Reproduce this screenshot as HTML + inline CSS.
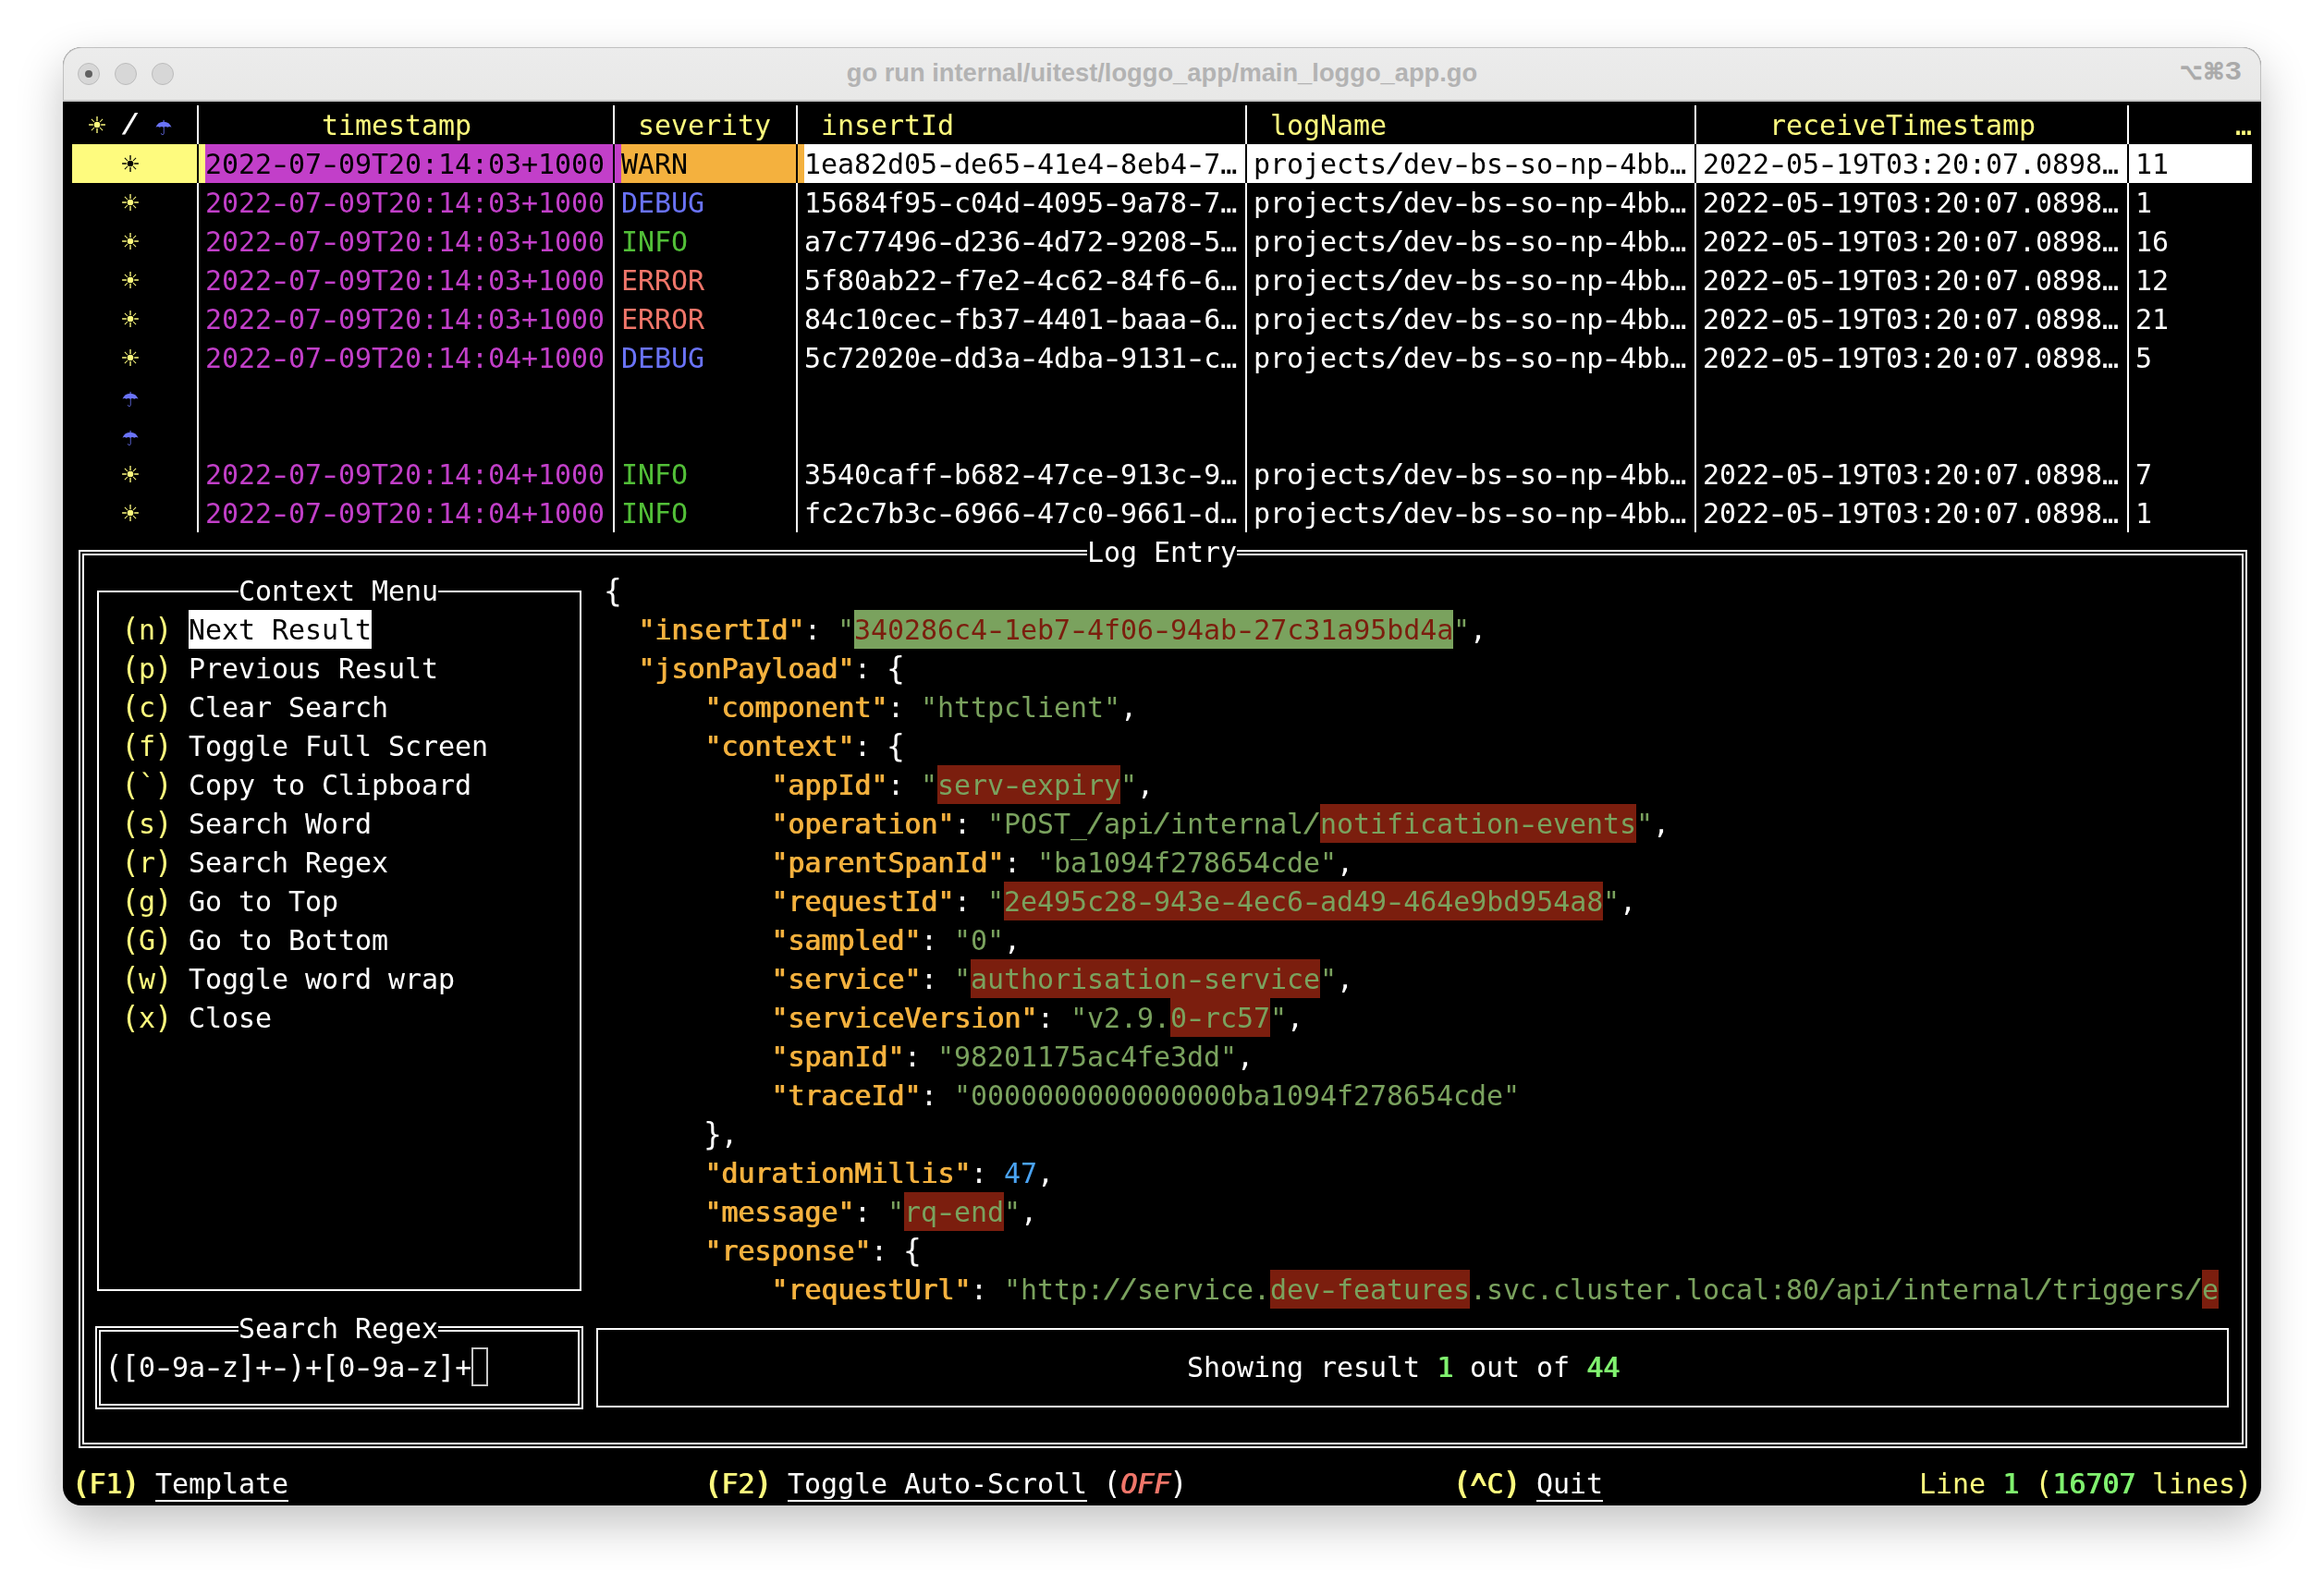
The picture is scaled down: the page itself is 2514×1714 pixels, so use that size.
<!DOCTYPE html>
<html><head><meta charset="utf-8"><title>go run internal/uitest/loggo_app/main_loggo_app.go</title>
<style>
html,body{margin:0;padding:0;background:#fff;}
body{width:2514px;height:1714px;position:relative;overflow:hidden;}
.win{position:absolute;left:68px;top:51px;width:2378px;height:1578px;border-radius:20px;background:#000;overflow:hidden;
 box-shadow:0 20px 50px rgba(0,0,0,.24);}
.tb:after{content:"";position:absolute;left:0;top:0;right:0;height:80px;border-radius:20px 20px 0 0;box-shadow:inset 0 0 0 1px rgba(150,150,150,.5);pointer-events:none;}
.tb{position:absolute;left:0;top:0;right:0;height:57px;overflow:hidden;background:linear-gradient(#ececec,#e8e8e7);border-bottom:2px solid #c6c6c6;}
.lt{position:absolute;top:17px;width:22px;height:22px;border-radius:50%;background:#d7d7d7;border:1px solid #bbbbbb;}
.lt i{position:absolute;left:7px;top:7px;width:8px;height:8px;border-radius:50%;background:#606060;}
.ttl{position:absolute;left:0;right:0;top:0;height:57px;text-align:center;font:bold 27.3px "Liberation Sans",sans-serif;line-height:56px;color:#b3b3b3;white-space:pre;}
.kb{position:absolute;right:23px;top:0;height:57px;font:bold 25px "Liberation Sans","DejaVu Sans",sans-serif;line-height:50px;letter-spacing:-2.2px;color:#aaaaaa;-webkit-text-stroke:.6px #aaaaaa;white-space:pre;}
.kb b{-webkit-text-stroke:0;font-size:28.5px;letter-spacing:0;margin-left:3px;display:inline-block;transform:scaleX(1.12);transform-origin:0 50%;}
.kb u{display:inline-block;text-decoration:none;margin-right:3px;transform:scaleX(.85);transform-origin:100% 50%;}
.term{position:absolute;left:0;top:0;width:2514px;height:1714px;font-family:"DejaVu Sans Mono","Liberation Mono",monospace;font-size:30px;letter-spacing:-0.0615px;will-change:transform;}
.t{position:absolute;height:42px;line-height:44px;white-space:pre;display:block;}
.b{position:absolute;height:42px;}
.r{position:absolute;}
.bx{position:absolute;box-sizing:border-box;border:2px solid #fff;}
.ic{position:absolute;overflow:visible;}
.bd{text-shadow:1px 0 0 currentColor;}
.it{font-style:italic;}
.sl{transform:translateY(-2.5px) scale(1.22,0.97);}
.t i{display:inline-block;font-style:inherit;}
.h{transform:scaleX(1.42);}
.p{transform:scale(1.1,1.11);}
.c{transform-origin:50% 20%;transform:scaleY(1.7);}
.s{transform:translateY(-2px) scale(1.19,0.97);}
.ul{text-decoration:underline;text-decoration-thickness:2px;text-underline-offset:6.5px;}
.cur{position:absolute;width:18px;height:42px;box-sizing:border-box;border:2px solid #c7c7c7;}
</style></head>
<body>
<div class="win">
 <div class="tb">
  <div class="lt" style="left:16px"><i></i></div><div class="lt" style="left:56px"></div><div class="lt" style="left:96px"></div>
  <div class="ttl">go run internal/uitest/loggo_app/main_loggo_app.go</div>
  <div class="kb"><u>⌥</u>⌘<b>3</b></div>
 </div>
</div>
<div class="term">
<svg class="ic" style="left:95px;top:125px" width="20" height="20" viewBox="-10 -10 20 20"><circle r="3.3" fill="#fefb7e"/><g stroke="#fefb7e" fill="none"><path d="M0-8.9V-4M0 8.9V4M-8.9 0H-4.2M8.9 0H4.2" stroke-width="1.35"/><path d="M-6.1-6.1L-3-3M6.1 6.1L3 3M-6.1 6.1L-3 3M6.1-6.1L3-3" stroke-width="1.05"/></g></svg>
<span class="t sl" style="left:132px;top:114px;color:#fff;">/</span>
<svg class="ic" style="left:167.3px;top:126px" width="20" height="24" viewBox="-10 -12 20 24"><path d="M-8.5-0.3A9 9 0 0 1 8.5-0.3Q6.4-1.9 4.25-0.3Q2.1-1.9 0-0.3Q-2.1-1.9-4.25-0.3Q-6.4-1.9-8.5-0.3Z" fill="#6a73f8"/><path d="M0.1-8.1V-5.5" stroke="#6a73f8" stroke-width="1" fill="none"/><path d="M0.25-1.5V6.2A1.45 1.45 0 0 1-2.65 6.2" fill="none" stroke="#6a73f8" stroke-width="1" stroke-opacity=".8"/></svg>
<span class="t" style="left:348px;top:114px;color:#fefb7e;">timestamp</span>
<span class="t" style="left:690px;top:114px;color:#fefb7e;">severity</span>
<span class="t" style="left:888px;top:114px;color:#fefb7e;">insertId</span>
<span class="t" style="left:1374px;top:114px;color:#fefb7e;">logName</span>
<span class="t" style="left:1914px;top:114px;color:#fefb7e;">receiveTimestamp</span>
<span class="t" style="left:2418px;top:114px;color:#fefb7e;">…</span>
<div class="b" style="left:78px;top:156px;width:144px;background:#fefb7e;"></div>
<div class="b" style="left:222px;top:156px;width:450px;background:#c23fc9;"></div>
<div class="b" style="left:672px;top:156px;width:198px;background:#f4b13e;"></div>
<div class="b" style="left:870px;top:156px;width:1566px;background:#fff;"></div>
<svg class="ic" style="left:131px;top:167px" width="20" height="20" viewBox="-10 -10 20 20"><circle r="3.3" fill="#000"/><g stroke="#000" fill="none"><path d="M0-8.9V-4M0 8.9V4M-8.9 0H-4.2M8.9 0H4.2" stroke-width="1.35"/><path d="M-6.1-6.1L-3-3M6.1 6.1L3 3M-6.1 6.1L-3 3M6.1-6.1L3-3" stroke-width="1.05"/></g></svg>
<span class="t" style="left:222px;top:156px;color:#000;">2022<i class="h">-</i>07<i class="h">-</i>09T20:14:03+1000</span>
<span class="t" style="left:672px;top:156px;color:#000;">WARN</span>
<span class="t" style="left:870px;top:156px;color:#000;">1ea82d05<i class="h">-</i>de65<i class="h">-</i>41e4<i class="h">-</i>8eb4<i class="h">-</i>7…</span>
<span class="t" style="left:1356px;top:156px;color:#000;">projects<i class="s">/</i>dev<i class="h">-</i>bs<i class="h">-</i>so<i class="h">-</i>np<i class="h">-</i>4bb…</span>
<span class="t" style="left:1842px;top:156px;color:#000;">2022<i class="h">-</i>05<i class="h">-</i>19T03:20:07.0898…</span>
<span class="t" style="left:2310px;top:156px;color:#000;">11</span>
<svg class="ic" style="left:131px;top:209px" width="20" height="20" viewBox="-10 -10 20 20"><circle r="3.3" fill="#fefb7e"/><g stroke="#fefb7e" fill="none"><path d="M0-8.9V-4M0 8.9V4M-8.9 0H-4.2M8.9 0H4.2" stroke-width="1.35"/><path d="M-6.1-6.1L-3-3M6.1 6.1L3 3M-6.1 6.1L-3 3M6.1-6.1L3-3" stroke-width="1.05"/></g></svg>
<span class="t" style="left:222px;top:198px;color:#c23fc9;">2022<i class="h">-</i>07<i class="h">-</i>09T20:14:03+1000</span>
<span class="t" style="left:672px;top:198px;color:#6a73f8;">DEBUG</span>
<span class="t" style="left:870px;top:198px;color:#fff;">15684f95<i class="h">-</i>c04d<i class="h">-</i>4095<i class="h">-</i>9a78<i class="h">-</i>7…</span>
<span class="t" style="left:1356px;top:198px;color:#fff;">projects<i class="s">/</i>dev<i class="h">-</i>bs<i class="h">-</i>so<i class="h">-</i>np<i class="h">-</i>4bb…</span>
<span class="t" style="left:1842px;top:198px;color:#fff;">2022<i class="h">-</i>05<i class="h">-</i>19T03:20:07.0898…</span>
<span class="t" style="left:2310px;top:198px;color:#fff;">1</span>
<svg class="ic" style="left:131px;top:251px" width="20" height="20" viewBox="-10 -10 20 20"><circle r="3.3" fill="#fefb7e"/><g stroke="#fefb7e" fill="none"><path d="M0-8.9V-4M0 8.9V4M-8.9 0H-4.2M8.9 0H4.2" stroke-width="1.35"/><path d="M-6.1-6.1L-3-3M6.1 6.1L3 3M-6.1 6.1L-3 3M6.1-6.1L3-3" stroke-width="1.05"/></g></svg>
<span class="t" style="left:222px;top:240px;color:#c23fc9;">2022<i class="h">-</i>07<i class="h">-</i>09T20:14:03+1000</span>
<span class="t" style="left:672px;top:240px;color:#52bf38;">INFO</span>
<span class="t" style="left:870px;top:240px;color:#fff;">a7c77496<i class="h">-</i>d236<i class="h">-</i>4d72<i class="h">-</i>9208<i class="h">-</i>5…</span>
<span class="t" style="left:1356px;top:240px;color:#fff;">projects<i class="s">/</i>dev<i class="h">-</i>bs<i class="h">-</i>so<i class="h">-</i>np<i class="h">-</i>4bb…</span>
<span class="t" style="left:1842px;top:240px;color:#fff;">2022<i class="h">-</i>05<i class="h">-</i>19T03:20:07.0898…</span>
<span class="t" style="left:2310px;top:240px;color:#fff;">16</span>
<svg class="ic" style="left:131px;top:293px" width="20" height="20" viewBox="-10 -10 20 20"><circle r="3.3" fill="#fefb7e"/><g stroke="#fefb7e" fill="none"><path d="M0-8.9V-4M0 8.9V4M-8.9 0H-4.2M8.9 0H4.2" stroke-width="1.35"/><path d="M-6.1-6.1L-3-3M6.1 6.1L3 3M-6.1 6.1L-3 3M6.1-6.1L3-3" stroke-width="1.05"/></g></svg>
<span class="t" style="left:222px;top:282px;color:#c23fc9;">2022<i class="h">-</i>07<i class="h">-</i>09T20:14:03+1000</span>
<span class="t" style="left:672px;top:282px;color:#f0766a;">ERROR</span>
<span class="t" style="left:870px;top:282px;color:#fff;">5f80ab22<i class="h">-</i>f7e2<i class="h">-</i>4c62<i class="h">-</i>84f6<i class="h">-</i>6…</span>
<span class="t" style="left:1356px;top:282px;color:#fff;">projects<i class="s">/</i>dev<i class="h">-</i>bs<i class="h">-</i>so<i class="h">-</i>np<i class="h">-</i>4bb…</span>
<span class="t" style="left:1842px;top:282px;color:#fff;">2022<i class="h">-</i>05<i class="h">-</i>19T03:20:07.0898…</span>
<span class="t" style="left:2310px;top:282px;color:#fff;">12</span>
<svg class="ic" style="left:131px;top:335px" width="20" height="20" viewBox="-10 -10 20 20"><circle r="3.3" fill="#fefb7e"/><g stroke="#fefb7e" fill="none"><path d="M0-8.9V-4M0 8.9V4M-8.9 0H-4.2M8.9 0H4.2" stroke-width="1.35"/><path d="M-6.1-6.1L-3-3M6.1 6.1L3 3M-6.1 6.1L-3 3M6.1-6.1L3-3" stroke-width="1.05"/></g></svg>
<span class="t" style="left:222px;top:324px;color:#c23fc9;">2022<i class="h">-</i>07<i class="h">-</i>09T20:14:03+1000</span>
<span class="t" style="left:672px;top:324px;color:#f0766a;">ERROR</span>
<span class="t" style="left:870px;top:324px;color:#fff;">84c10cec<i class="h">-</i>fb37<i class="h">-</i>4401<i class="h">-</i>baaa<i class="h">-</i>6…</span>
<span class="t" style="left:1356px;top:324px;color:#fff;">projects<i class="s">/</i>dev<i class="h">-</i>bs<i class="h">-</i>so<i class="h">-</i>np<i class="h">-</i>4bb…</span>
<span class="t" style="left:1842px;top:324px;color:#fff;">2022<i class="h">-</i>05<i class="h">-</i>19T03:20:07.0898…</span>
<span class="t" style="left:2310px;top:324px;color:#fff;">21</span>
<svg class="ic" style="left:131px;top:377px" width="20" height="20" viewBox="-10 -10 20 20"><circle r="3.3" fill="#fefb7e"/><g stroke="#fefb7e" fill="none"><path d="M0-8.9V-4M0 8.9V4M-8.9 0H-4.2M8.9 0H4.2" stroke-width="1.35"/><path d="M-6.1-6.1L-3-3M6.1 6.1L3 3M-6.1 6.1L-3 3M6.1-6.1L3-3" stroke-width="1.05"/></g></svg>
<span class="t" style="left:222px;top:366px;color:#c23fc9;">2022<i class="h">-</i>07<i class="h">-</i>09T20:14:04+1000</span>
<span class="t" style="left:672px;top:366px;color:#6a73f8;">DEBUG</span>
<span class="t" style="left:870px;top:366px;color:#fff;">5c72020e<i class="h">-</i>dd3a<i class="h">-</i>4dba<i class="h">-</i>9131<i class="h">-</i>c…</span>
<span class="t" style="left:1356px;top:366px;color:#fff;">projects<i class="s">/</i>dev<i class="h">-</i>bs<i class="h">-</i>so<i class="h">-</i>np<i class="h">-</i>4bb…</span>
<span class="t" style="left:1842px;top:366px;color:#fff;">2022<i class="h">-</i>05<i class="h">-</i>19T03:20:07.0898…</span>
<span class="t" style="left:2310px;top:366px;color:#fff;">5</span>
<svg class="ic" style="left:131.3px;top:420px" width="20" height="24" viewBox="-10 -12 20 24"><path d="M-8.5-0.3A9 9 0 0 1 8.5-0.3Q6.4-1.9 4.25-0.3Q2.1-1.9 0-0.3Q-2.1-1.9-4.25-0.3Q-6.4-1.9-8.5-0.3Z" fill="#6a73f8"/><path d="M0.1-8.1V-5.5" stroke="#6a73f8" stroke-width="1" fill="none"/><path d="M0.25-1.5V6.2A1.45 1.45 0 0 1-2.65 6.2" fill="none" stroke="#6a73f8" stroke-width="1" stroke-opacity=".8"/></svg>
<svg class="ic" style="left:131.3px;top:462px" width="20" height="24" viewBox="-10 -12 20 24"><path d="M-8.5-0.3A9 9 0 0 1 8.5-0.3Q6.4-1.9 4.25-0.3Q2.1-1.9 0-0.3Q-2.1-1.9-4.25-0.3Q-6.4-1.9-8.5-0.3Z" fill="#6a73f8"/><path d="M0.1-8.1V-5.5" stroke="#6a73f8" stroke-width="1" fill="none"/><path d="M0.25-1.5V6.2A1.45 1.45 0 0 1-2.65 6.2" fill="none" stroke="#6a73f8" stroke-width="1" stroke-opacity=".8"/></svg>
<svg class="ic" style="left:131px;top:503px" width="20" height="20" viewBox="-10 -10 20 20"><circle r="3.3" fill="#fefb7e"/><g stroke="#fefb7e" fill="none"><path d="M0-8.9V-4M0 8.9V4M-8.9 0H-4.2M8.9 0H4.2" stroke-width="1.35"/><path d="M-6.1-6.1L-3-3M6.1 6.1L3 3M-6.1 6.1L-3 3M6.1-6.1L3-3" stroke-width="1.05"/></g></svg>
<span class="t" style="left:222px;top:492px;color:#c23fc9;">2022<i class="h">-</i>07<i class="h">-</i>09T20:14:04+1000</span>
<span class="t" style="left:672px;top:492px;color:#52bf38;">INFO</span>
<span class="t" style="left:870px;top:492px;color:#fff;">3540caff<i class="h">-</i>b682<i class="h">-</i>47ce<i class="h">-</i>913c<i class="h">-</i>9…</span>
<span class="t" style="left:1356px;top:492px;color:#fff;">projects<i class="s">/</i>dev<i class="h">-</i>bs<i class="h">-</i>so<i class="h">-</i>np<i class="h">-</i>4bb…</span>
<span class="t" style="left:1842px;top:492px;color:#fff;">2022<i class="h">-</i>05<i class="h">-</i>19T03:20:07.0898…</span>
<span class="t" style="left:2310px;top:492px;color:#fff;">7</span>
<svg class="ic" style="left:131px;top:545px" width="20" height="20" viewBox="-10 -10 20 20"><circle r="3.3" fill="#fefb7e"/><g stroke="#fefb7e" fill="none"><path d="M0-8.9V-4M0 8.9V4M-8.9 0H-4.2M8.9 0H4.2" stroke-width="1.35"/><path d="M-6.1-6.1L-3-3M6.1 6.1L3 3M-6.1 6.1L-3 3M6.1-6.1L3-3" stroke-width="1.05"/></g></svg>
<span class="t" style="left:222px;top:534px;color:#c23fc9;">2022<i class="h">-</i>07<i class="h">-</i>09T20:14:04+1000</span>
<span class="t" style="left:672px;top:534px;color:#52bf38;">INFO</span>
<span class="t" style="left:870px;top:534px;color:#fff;">fc2c7b3c<i class="h">-</i>6966<i class="h">-</i>47c0<i class="h">-</i>9661<i class="h">-</i>d…</span>
<span class="t" style="left:1356px;top:534px;color:#fff;">projects<i class="s">/</i>dev<i class="h">-</i>bs<i class="h">-</i>so<i class="h">-</i>np<i class="h">-</i>4bb…</span>
<span class="t" style="left:1842px;top:534px;color:#fff;">2022<i class="h">-</i>05<i class="h">-</i>19T03:20:07.0898…</span>
<span class="t" style="left:2310px;top:534px;color:#fff;">1</span>
<div class="r" style="left:213px;top:114px;width:2px;height:462px;background:#fff"></div>
<div class="r" style="left:213px;top:156px;width:2px;height:42px;background:#000"></div>
<div class="r" style="left:663px;top:114px;width:2px;height:462px;background:#fff"></div>
<div class="r" style="left:663px;top:156px;width:2px;height:42px;background:#000"></div>
<div class="r" style="left:861px;top:114px;width:2px;height:462px;background:#fff"></div>
<div class="r" style="left:861px;top:156px;width:2px;height:42px;background:#000"></div>
<div class="r" style="left:1347px;top:114px;width:2px;height:462px;background:#fff"></div>
<div class="r" style="left:1347px;top:156px;width:2px;height:42px;background:#000"></div>
<div class="r" style="left:1833px;top:114px;width:2px;height:462px;background:#fff"></div>
<div class="r" style="left:1833px;top:156px;width:2px;height:42px;background:#000"></div>
<div class="r" style="left:2301px;top:114px;width:2px;height:462px;background:#fff"></div>
<div class="r" style="left:2301px;top:156px;width:2px;height:42px;background:#000"></div>
<div class="bx" style="left:85px;top:595px;width:2346px;height:972px"></div>
<div class="bx" style="left:89px;top:599px;width:2338px;height:964px"></div>
<span class="t" style="left:1176px;top:576px;color:#fff;background:#000;width:162px;">Log Entry</span>
<div class="bx" style="left:105px;top:639px;width:524px;height:758px"></div>
<span class="t" style="left:258px;top:618px;color:#fff;background:#000;width:216px;">Context Menu</span>
<div class="bx" style="left:103px;top:1435px;width:528px;height:90px"></div>
<div class="bx" style="left:107px;top:1439px;width:520px;height:82px"></div>
<span class="t" style="left:258px;top:1416px;color:#fff;background:#000;width:216px;">Search Regex</span>
<div class="bx" style="left:645px;top:1437px;width:1766px;height:86px"></div>
<span class="t" style="left:132px;top:660px;color:#fefb7e;"><i class="p">(</i>n<i class="p">)</i></span>
<span class="t" style="left:204px;top:660px;color:#000;background:#fff;width:198px;">Next Result</span>
<span class="t" style="left:132px;top:702px;color:#fefb7e;"><i class="p">(</i>p<i class="p">)</i></span>
<span class="t" style="left:204px;top:702px;color:#fff;">Previous Result</span>
<span class="t" style="left:132px;top:744px;color:#fefb7e;"><i class="p">(</i>c<i class="p">)</i></span>
<span class="t" style="left:204px;top:744px;color:#fff;">Clear Search</span>
<span class="t" style="left:132px;top:786px;color:#fefb7e;"><i class="p">(</i>f<i class="p">)</i></span>
<span class="t" style="left:204px;top:786px;color:#fff;">Toggle Full Screen</span>
<span class="t" style="left:132px;top:828px;color:#fefb7e;"><i class="p">(</i>`<i class="p">)</i></span>
<span class="t" style="left:204px;top:828px;color:#fff;">Copy to Clipboard</span>
<span class="t" style="left:132px;top:870px;color:#fefb7e;"><i class="p">(</i>s<i class="p">)</i></span>
<span class="t" style="left:204px;top:870px;color:#fff;">Search Word</span>
<span class="t" style="left:132px;top:912px;color:#fefb7e;"><i class="p">(</i>r<i class="p">)</i></span>
<span class="t" style="left:204px;top:912px;color:#fff;">Search Regex</span>
<span class="t" style="left:132px;top:954px;color:#fefb7e;"><i class="p">(</i>g<i class="p">)</i></span>
<span class="t" style="left:204px;top:954px;color:#fff;">Go to Top</span>
<span class="t" style="left:132px;top:996px;color:#fefb7e;"><i class="p">(</i>G<i class="p">)</i></span>
<span class="t" style="left:204px;top:996px;color:#fff;">Go to Bottom</span>
<span class="t" style="left:132px;top:1038px;color:#fefb7e;"><i class="p">(</i>w<i class="p">)</i></span>
<span class="t" style="left:204px;top:1038px;color:#fff;">Toggle word wrap</span>
<span class="t" style="left:132px;top:1080px;color:#fefb7e;"><i class="p">(</i>x<i class="p">)</i></span>
<span class="t" style="left:204px;top:1080px;color:#fff;">Close</span>
<span class="t" style="left:114px;top:1458px;color:#fff;"><i class="p">(</i><i class="p">[</i>0<i class="h">-</i>9a<i class="h">-</i>z<i class="p">]</i>+<i class="h">-</i><i class="p">)</i>+<i class="p">[</i>0<i class="h">-</i>9a<i class="h">-</i>z<i class="p">]</i>+</span>
<div class="cur" style="left:510px;top:1458px"></div>
<span class="t" style="left:1284px;top:1458px;color:#fff;">Showing result </span>
<span class="t bd" style="left:1554px;top:1458px;color:#80f26f;">1</span>
<span class="t" style="left:1572px;top:1458px;color:#fff;"> out of </span>
<span class="t bd" style="left:1716px;top:1458px;color:#80f26f;">44</span>
<span class="t" style="left:654px;top:618px;color:#fff;"><i class="p">{</i></span>
<span class="t bd" style="left:690px;top:660px;color:#f4b13e;">"insertId"</span>
<span class="t" style="left:870px;top:660px;color:#fff;">: </span>
<span class="t" style="left:906px;top:660px;color:#7aa25e;">"</span>
<span class="t" style="left:924px;top:660px;color:#7b1e0e;background:#7aa25e;width:648px;">340286c4<i class="h">-</i>1eb7<i class="h">-</i>4f06<i class="h">-</i>94ab<i class="h">-</i>27c31a95bd4a</span>
<span class="t" style="left:1572px;top:660px;color:#7aa25e;">"</span>
<span class="t" style="left:1590px;top:660px;color:#fff;">,</span>
<span class="t bd" style="left:690px;top:702px;color:#f4b13e;">"jsonPayload"</span>
<span class="t" style="left:924px;top:702px;color:#fff;">: <i class="p">{</i></span>
<span class="t bd" style="left:762px;top:744px;color:#f4b13e;">"component"</span>
<span class="t" style="left:960px;top:744px;color:#fff;">: </span>
<span class="t" style="left:996px;top:744px;color:#7aa25e;">"httpclient"</span>
<span class="t" style="left:1212px;top:744px;color:#fff;">,</span>
<span class="t bd" style="left:762px;top:786px;color:#f4b13e;">"context"</span>
<span class="t" style="left:924px;top:786px;color:#fff;">: <i class="p">{</i></span>
<span class="t bd" style="left:834px;top:828px;color:#f4b13e;">"appId"</span>
<span class="t" style="left:960px;top:828px;color:#fff;">: </span>
<span class="t" style="left:996px;top:828px;color:#7aa25e;">"</span>
<span class="t" style="left:1014px;top:828px;color:#7aa25e;background:#7b1e0e;width:198px;">serv<i class="h">-</i>expiry</span>
<span class="t" style="left:1212px;top:828px;color:#7aa25e;">"</span>
<span class="t" style="left:1230px;top:828px;color:#fff;">,</span>
<span class="t bd" style="left:834px;top:870px;color:#f4b13e;">"operation"</span>
<span class="t" style="left:1032px;top:870px;color:#fff;">: </span>
<span class="t" style="left:1068px;top:870px;color:#7aa25e;">"POST_<i class="s">/</i>api<i class="s">/</i>internal<i class="s">/</i></span>
<span class="t" style="left:1428px;top:870px;color:#7aa25e;background:#7b1e0e;width:342px;">notification<i class="h">-</i>events</span>
<span class="t" style="left:1770px;top:870px;color:#7aa25e;">"</span>
<span class="t" style="left:1788px;top:870px;color:#fff;">,</span>
<span class="t bd" style="left:834px;top:912px;color:#f4b13e;">"parentSpanId"</span>
<span class="t" style="left:1086px;top:912px;color:#fff;">: </span>
<span class="t" style="left:1122px;top:912px;color:#7aa25e;">"ba1094f278654cde"</span>
<span class="t" style="left:1446px;top:912px;color:#fff;">,</span>
<span class="t bd" style="left:834px;top:954px;color:#f4b13e;">"requestId"</span>
<span class="t" style="left:1032px;top:954px;color:#fff;">: </span>
<span class="t" style="left:1068px;top:954px;color:#7aa25e;">"</span>
<span class="t" style="left:1086px;top:954px;color:#7aa25e;background:#7b1e0e;width:648px;">2e495c28<i class="h">-</i>943e<i class="h">-</i>4ec6<i class="h">-</i>ad49<i class="h">-</i>464e9bd954a8</span>
<span class="t" style="left:1734px;top:954px;color:#7aa25e;">"</span>
<span class="t" style="left:1752px;top:954px;color:#fff;">,</span>
<span class="t bd" style="left:834px;top:996px;color:#f4b13e;">"sampled"</span>
<span class="t" style="left:996px;top:996px;color:#fff;">: </span>
<span class="t" style="left:1032px;top:996px;color:#7aa25e;">"0"</span>
<span class="t" style="left:1086px;top:996px;color:#fff;">,</span>
<span class="t bd" style="left:834px;top:1038px;color:#f4b13e;">"service"</span>
<span class="t" style="left:996px;top:1038px;color:#fff;">: </span>
<span class="t" style="left:1032px;top:1038px;color:#7aa25e;">"</span>
<span class="t" style="left:1050px;top:1038px;color:#7aa25e;background:#7b1e0e;width:378px;">authorisation<i class="h">-</i>service</span>
<span class="t" style="left:1428px;top:1038px;color:#7aa25e;">"</span>
<span class="t" style="left:1446px;top:1038px;color:#fff;">,</span>
<span class="t bd" style="left:834px;top:1080px;color:#f4b13e;">"serviceVersion"</span>
<span class="t" style="left:1122px;top:1080px;color:#fff;">: </span>
<span class="t" style="left:1158px;top:1080px;color:#7aa25e;">"v2.9.</span>
<span class="t" style="left:1266px;top:1080px;color:#7aa25e;background:#7b1e0e;width:108px;">0<i class="h">-</i>rc57</span>
<span class="t" style="left:1374px;top:1080px;color:#7aa25e;">"</span>
<span class="t" style="left:1392px;top:1080px;color:#fff;">,</span>
<span class="t bd" style="left:834px;top:1122px;color:#f4b13e;">"spanId"</span>
<span class="t" style="left:978px;top:1122px;color:#fff;">: </span>
<span class="t" style="left:1014px;top:1122px;color:#7aa25e;">"98201175ac4fe3dd"</span>
<span class="t" style="left:1338px;top:1122px;color:#fff;">,</span>
<span class="t bd" style="left:834px;top:1164px;color:#f4b13e;">"traceId"</span>
<span class="t" style="left:996px;top:1164px;color:#fff;">: </span>
<span class="t" style="left:1032px;top:1164px;color:#7aa25e;">"0000000000000000ba1094f278654cde"</span>
<span class="t" style="left:762px;top:1206px;color:#fff;"><i class="p">}</i>,</span>
<span class="t bd" style="left:762px;top:1248px;color:#f4b13e;">"durationMillis"</span>
<span class="t" style="left:1050px;top:1248px;color:#fff;">: </span>
<span class="t" style="left:1086px;top:1248px;color:#4aa3f3;">47</span>
<span class="t" style="left:1122px;top:1248px;color:#fff;">,</span>
<span class="t bd" style="left:762px;top:1290px;color:#f4b13e;">"message"</span>
<span class="t" style="left:924px;top:1290px;color:#fff;">: </span>
<span class="t" style="left:960px;top:1290px;color:#7aa25e;">"</span>
<span class="t" style="left:978px;top:1290px;color:#7aa25e;background:#7b1e0e;width:108px;">rq<i class="h">-</i>end</span>
<span class="t" style="left:1086px;top:1290px;color:#7aa25e;">"</span>
<span class="t" style="left:1104px;top:1290px;color:#fff;">,</span>
<span class="t bd" style="left:762px;top:1332px;color:#f4b13e;">"response"</span>
<span class="t" style="left:942px;top:1332px;color:#fff;">: <i class="p">{</i></span>
<span class="t bd" style="left:834px;top:1374px;color:#f4b13e;">"requestUrl"</span>
<span class="t" style="left:1050px;top:1374px;color:#fff;">: </span>
<span class="t" style="left:1086px;top:1374px;color:#7aa25e;">"http:<i class="s">/</i><i class="s">/</i>service.</span>
<span class="t" style="left:1374px;top:1374px;color:#7aa25e;background:#7b1e0e;width:216px;">dev<i class="h">-</i>features</span>
<span class="t" style="left:1590px;top:1374px;color:#7aa25e;">.svc.cluster.local:80<i class="s">/</i>api<i class="s">/</i>internal<i class="s">/</i>triggers<i class="s">/</i></span>
<span class="t" style="left:2382px;top:1374px;color:#7aa25e;background:#7b1e0e;width:18px;">e</span>
<span class="t bd" style="left:78px;top:1584px;color:#fefb7e;"><i class="p">(</i>F1<i class="p">)</i></span>
<span class="t ul" style="left:168px;top:1584px;color:#fff;">Template</span>
<span class="t bd" style="left:762px;top:1584px;color:#fefb7e;"><i class="p">(</i>F2<i class="p">)</i></span>
<span class="t ul" style="left:852px;top:1584px;color:#fff;">Toggle Auto-Scroll</span>
<span class="t" style="left:1194px;top:1584px;color:#fff;"><i class="p">(</i></span>
<span class="t bd it" style="left:1212px;top:1584px;color:#f0766a;">OFF</span>
<span class="t" style="left:1266px;top:1584px;color:#fff;"><i class="p">)</i></span>
<span class="t bd" style="left:1572px;top:1584px;color:#fefb7e;"><i class="p">(</i><i class="c">^</i>C<i class="p">)</i></span>
<span class="t ul" style="left:1662px;top:1584px;color:#fff;">Quit</span>
<span class="t" style="left:2076px;top:1584px;color:#fefb7e;">Line </span>
<span class="t bd" style="left:2166px;top:1584px;color:#80f26f;">1</span>
<span class="t" style="left:2184px;top:1584px;color:#fefb7e;"> <i class="p">(</i></span>
<span class="t bd" style="left:2220px;top:1584px;color:#80f26f;">16707</span>
<span class="t" style="left:2310px;top:1584px;color:#fefb7e;"> lines<i class="p">)</i></span>
</div>
</body></html>
